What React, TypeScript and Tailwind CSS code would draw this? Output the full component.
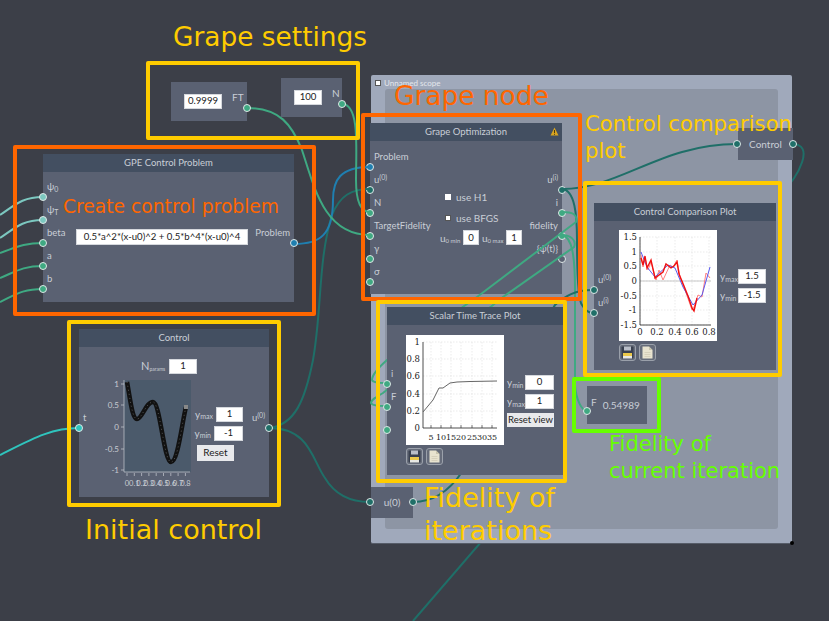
import React from 'react'

const TEAL = '#1f6f68'
const GREEN = '#3fa982'

const Dot = ({ fill, className }: { fill: string; className: string }) => (
  <span
    className={`absolute w-[8px] h-[8px] rounded-full border border-[#dfe8e8] ${className}`}
    style={{ backgroundColor: fill }}
  />
)

interface PortDef {
  label?: React.ReactNode
  fill: string
}

// one column of node ports, 23px apart, label sits above the dot
const PortCol: React.FC<{ ports: PortDef[]; side: 'left' | 'right'; className: string }> = ({ ports, side, className }) => (
  <div className={`absolute flex flex-col ${side === 'left' ? 'left-0 items-start' : 'right-0 items-end'} ${className}`}>
    {ports.map((p, i) => (
      <div key={i} className="relative h-[23px] flex items-end pb-[5px] px-[4px] text-[9.5px] leading-[12px] text-[#c9ced6] whitespace-nowrap">
        {p.label}
        <Dot fill={p.fill} className={side === 'left' ? 'left-[-4px] bottom-[-3px]' : 'right-[-4px] bottom-[-3px]'} />
      </div>
    ))}
  </div>
)

const Title: React.FC<{ children: React.ReactNode }> = ({ children }) => (
  <div className="relative h-[18px] bg-[#434f61] flex items-center justify-center text-[9.5px] font-normal text-[#c9ced6]">{children}</div>
)

const Field: React.FC<{ value: string; className: string }> = ({ value, className }) => (
  <div className={`bg-white flex items-center justify-center text-[9.6px] text-[#222] border border-[#d5d8dd] whitespace-nowrap ${className}`}>{value}</div>
)

const Sub: React.FC<{ a: string; b: string }> = ({ a, b }) => (
  <span className="text-[10px] text-[#c9ced6] whitespace-nowrap">
    {a}
    <sub className="text-[7px]">{b}</sub>
  </span>
)

const USup: React.FC<{ s: string }> = ({ s }) => (
  <span>
    u<sup className="text-[7px]">({s})</sup>
  </span>
)

const SaveIcon = () => (
  <div className="w-[17px] h-[17px] rounded-[3px] border border-[#9aa0aa] bg-[#666c7a] flex items-center justify-center">
    <svg width="13" height="13" viewBox="0 0 13 13">
      <rect x="0.5" y="0.5" width="12" height="12" rx="1" fill="#39404f" />
      <rect x="3" y="0.5" width="7" height="4" fill="#b9bec8" />
      <rect x="2" y="7" width="9" height="3" fill="#ecc94a" />
      <rect x="2" y="10" width="9" height="2.5" fill="#e8e8e4" />
    </svg>
  </div>
)

const DocIcon = () => (
  <div className="w-[17px] h-[17px] rounded-[3px] border border-[#9aa0aa] bg-[#666c7a] flex items-center justify-center">
    <svg width="11" height="13" viewBox="0 0 11 13">
      <path d="M0.5 0.5 H7 L10.5 4 V12.5 H0.5 Z" fill="#e8e3cf" />
      <path d="M7 0.5 V4 H10.5" fill="#c9c4ae" />
      <path d="M2.5 6.5 H8.5 M2.5 8.5 H8.5 M2.5 10.5 H8.5" stroke="#d0cbb6" strokeWidth="0.8" />
    </svg>
  </div>
)

const ControlPlot = () => {
  const xs = ['0', '0.1', '0.2', '0.3', '0.4', '0.5', '0.6', '0.7', '0.8']
  const ys: [string, number][] = [['1', 382], ['0.5', 403], ['0', 425], ['-0.5', 447], ['-1', 468]]
  const curve = 'M127 380 C130 395 132 417 137 417 C142 417 146 400 153 400 C160 400 164 460 171 460 C178 460 182 420 186 405'
  return (
    <svg width="87" height="112" viewBox="105 378 87 112" className="block" fontFamily="Lato, sans-serif">
      <rect x="124" y="378" width="67" height="92" fill="#4b5a6b" />
      <path d="M124 378 V470 H190" stroke="#c8ccd3" strokeWidth="0.7" fill="none" />
      {ys.map(([t, y]) => (
        <g key={t}>
          <path d={`M121 ${y} H124`} stroke="#c8ccd3" strokeWidth="0.7" />
          <text x="119" y={y + 3} textAnchor="end" fontSize="8" fill="#c8ccd3">{t}</text>
        </g>
      ))}
      {xs.map((t, i) => (
        <g key={t}>
          <path d={`M${127 + i * 7.3} 471 V474`} stroke="#c8ccd3" strokeWidth="0.7" />
          <text x={127 + i * 7.3} y="484" textAnchor="middle" fontSize="7.5" fill="#c8ccd3">{t}</text>
        </g>
      ))}
      <path d={curve} stroke="#111" strokeWidth="4.5" fill="none" />
      <path d={curve} stroke="#555" strokeWidth="1" strokeDasharray="1 3" fill="none" />
      <rect x="184" y="403" width="4" height="4" fill="#888" />
    </svg>
  )
}

const TracePlot = () => {
  const ys: [string, number][] = [['1', 342], ['0.8', 359], ['0.6', 376], ['0.4', 394], ['0.2', 411], ['0', 428]]
  const xs: [string, number][] = [['5', 431], ['10', 441], ['15', 451], ['20', 461], ['25', 472], ['30', 482], ['35', 492]]
  return (
    <svg width="98" height="110" viewBox="406 335 98 110" className="block bg-white" fontFamily="'DejaVu Serif', serif">
      {ys.slice(0, 5).map(([t, y]) => (
        <path key={t} d={`M423 ${y} H497`} stroke="#ddd" strokeWidth="0.6" strokeDasharray="1.5 1.5" />
      ))}
      {xs.map(([t, x]) => (
        <path key={t} d={`M${x} 342 V428`} stroke="#ddd" strokeWidth="0.6" strokeDasharray="1.5 1.5" />
      ))}
      <path d="M423 342 V428 H497" stroke="#222" strokeWidth="0.8" fill="none" />
      {ys.map(([t, y]) => (
        <text key={t} x="420" y={y + 3} textAnchor="end" fontSize="8.5" fill="#222">{t}</text>
      ))}
      {xs.map(([t, x]) => (
        <g key={t}>
          <path d={`M${x} 428 V425`} stroke="#222" strokeWidth="0.6" />
          <text x={x} y="440" textAnchor="middle" fontSize="8" fill="#222">{t}</text>
        </g>
      ))}
      <path d="M423 412 L433 400 L439 388 L443 388 L450 383 L457 382 L470 381.5 L497 381" stroke="#666" strokeWidth="1" fill="none" />
    </svg>
  )
}

const ComparisonPlot = () => {
  const ys: [string, number][] = [['1.5', 237], ['1', 252], ['0.5', 266], ['0', 281], ['-0.5', 296], ['-1', 310], ['-1.5', 325]]
  const xs: [string, number][] = [['0', 640], ['0.2', 657], ['0.4', 675], ['0.6', 692], ['0.8', 709]]
  return (
    <svg width="98" height="111" viewBox="619 230 98 111" className="block bg-white" fontFamily="'DejaVu Serif', serif">
      {ys.map(([t, y]) => (
        <path key={t} d={`M640 ${y} H711`} stroke="#ddd" strokeWidth="0.6" strokeDasharray="1.5 1.5" />
      ))}
      {xs.map(([t, x]) => (
        <path key={t} d={`M${x} 237 V325`} stroke="#ddd" strokeWidth="0.6" strokeDasharray="1.5 1.5" />
      ))}
      <path d="M640 281 H711" stroke="#bbb" strokeWidth="0.8" />
      <path d="M640 237 V325 H711" stroke="#222" strokeWidth="0.8" fill="none" />
      {ys.map(([t, y]) => (
        <text key={t} x="637" y={y + 3} textAnchor="end" fontSize="8.5" fill="#222">{t}</text>
      ))}
      {xs.map(([t, x]) => (
        <text key={t} x={x} y="335" textAnchor="middle" fontSize="8.5" fill="#222">{t}</text>
      ))}
      <polyline points="641,255 643,267 645,258 648,270 651,262 656,280 659,270 663,280 670,265 673,267 677,260 680,277 685,290 692,310 694,307 698,295 702,297 706,273 710,278" fill="none" stroke="#ff8080" strokeWidth="1" />
      <polyline points="641,252 647,267 655,277 668,265 675,268 683,287 693,305 702,295 710,267" fill="none" stroke="#5a5af0" strokeWidth="1" />
      <polyline points="641,258 643,265 645,256 647,268 651,260 655,278 663,272 666,264 671,268 674,266 677,262 679,274 684,286 688,296 692,308 694,311 697,298" fill="none" stroke="#f01010" strokeWidth="1.4" />
    </svg>
  )
}

const Box: React.FC<{ className: string }> = ({ className }) => (
  <div className={`absolute border-4 rounded-[2px] ${className}`} />
)

const Note: React.FC<{ className: string; children: React.ReactNode }> = ({ className, children }) => (
  <div className={`absolute font-['DejaVu_Sans',sans-serif] whitespace-nowrap ${className}`}>{children}</div>
)

export default function App() {
  return (
    <div className="relative w-[829px] h-[621px] overflow-hidden bg-[#3c3f48] font-['Lato',sans-serif]">
      {/* wire running behind the scope */}
      <svg className="absolute inset-0" width="829" height="621" fill="none">
        <path d="M792 144 C815 144 800 175 780 195 L413 621" stroke={TEAL} strokeWidth="2" />
      </svg>

      {/* scope */}
      <div className="absolute left-[371px] top-[75px] w-[421px] h-[469px] bg-[#a0a9bb] border-b border-[#565c68] rounded-[2px] p-[14px]">
        <div className="absolute left-[4px] top-[4px] flex items-center gap-[3px]">
          <span className="w-[6px] h-[6px] bg-white border border-[#555]" />
          <span className="text-[8px] leading-[8px] text-[#e4e7ec]">Unnamed scope</span>
        </div>
        <div className="w-full h-full rounded-[3px] bg-[#8d95a4]" />
        <span className="absolute right-[-2px] bottom-[-2px] w-[4px] h-[4px] rounded-full bg-black" />
      </div>

      {/* Grape node sits under the wires */}
      <div className="absolute left-[370px] top-[123px] w-[192px] h-[171px] bg-[#5a6172]">
        <Title>
          Grape Optimization
          <svg className="absolute right-[3px] top-[4px]" width="9" height="9" viewBox="0 0 9 9">
            <path d="M4.5 0.5 L8.5 8.5 H0.5 Z" fill="#d9a520" />
            <path d="M4.5 3 V6 M4.5 6.8 V7.8" stroke="#4a3a10" strokeWidth="1" />
          </svg>
        </Title>
        <PortCol
          side="left"
          className="top-[22px]"
          ports={[
            { label: 'Problem', fill: '#1f7fb0' },
            { label: <USup s="0" />, fill: TEAL },
            { label: 'N', fill: GREEN },
            { label: 'TargetFidelity', fill: GREEN },
            { label: 'γ', fill: GREEN },
            { label: 'σ', fill: GREEN },
          ]}
        />
        <PortCol
          side="right"
          className="top-[45px]"
          ports={[
            { label: <USup s="i" />, fill: TEAL },
            { label: 'i', fill: GREEN },
            { label: 'fidelity', fill: GREEN },
            { label: '{ψ(t)}', fill: '#5a6172' },
          ]}
        />
        <div className="flex flex-col items-start pl-[70px] pt-[50px] text-[10px] leading-[12px] text-[#c9ced6]">
          <div className="flex items-center gap-[5px] ml-[5px] h-[12px]">
            <span className="w-[6px] h-[6px] bg-white" />
            use H1
          </div>
          <div className="flex items-center gap-[5px] ml-[5px] mt-[9px] h-[12px]">
            <span className="w-[6px] h-[6px] bg-white border border-[#555]" />
            use BFGS
          </div>
          <div className="flex items-center mt-[6px]">
            <span className="w-[23px] whitespace-nowrap">
              u<sub className="text-[6px]">0 min</sub>
            </span>
            <Field value="0" className="w-[16px] h-[15px]" />
            <span className="ml-[3px] w-[24px] whitespace-nowrap">
              u<sub className="text-[6px]">0 max</sub>
            </span>
            <Field value="1" className="w-[16px] h-[15px]" />
          </div>
        </div>
      </div>

      {/* wires */}
      <svg className="absolute inset-0" width="829" height="621" fill="none" strokeWidth="2">
        <path d="M0 215 C15 205 22 197 43 197" stroke="#7cc8c0" />
        <path d="M0 238 C15 228 22 220 43 220" stroke="#7cc8c0" />
        <path d="M0 253 C15 248 22 243 43 243" stroke={GREEN} />
        <path d="M0 278 C15 272 22 266 43 266" stroke={GREEN} />
        <path d="M0 302 C15 295 22 289 43 289" stroke={GREEN} />
        <path d="M0 455 C30 440 50 428 79 428" stroke="#2fc4bd" />
        <path d="M269 428 C295 425 305 400 313 360 C322 310 318 260 332 215 C340 195 352 189 370 189" stroke={TEAL} />
        <path d="M269 428 C310 428 312 460 325 478 C335 495 350 502 370 502" stroke={TEAL} />
        <path d="M294 244 C320 244 333 235 333 200 C333 180 340 167 370 167" stroke="#1f7fb0" />
        <path d="M247 108 C280 108 292 125 302 150 C315 190 325 235 370 235" stroke={GREEN} />
        <path d="M342 104 C360 104 356 150 356 180 C356 200 360 212 370 212" stroke={GREEN} />
        <path d="M562 189 C620 189 660 144 737 144" stroke={TEAL} />
        <path d="M562 189 C575 190 577 215 577 240 C577 270 578 300 582 305 C585 310 588 313 593 313" stroke={TEAL} />
        <path d="M562 212 C572 212 578 214 576 222 L477 297 L387 360 C378 368 372 375 372 380 C373 383 380 383 387 383" stroke={GREEN} />
        <path d="M562 235 C570 235 577 240 574 247 L503 297 L383 393 C376 397 371 400 371 403 C372 406 380 406 387 406" stroke={GREEN} />
        <path d="M562 235 C572 237 575 255 575 290 L575 385 C576 400 582 411 587 411" stroke={GREEN} />
        <path d="M413 502 C435 502 450 490 462 472 L555 305 C565 296 575 290 593 290" stroke={TEAL} />
      </svg>

      {/* GPE Control Problem */}
      <div className="absolute left-[43px] top-[154px] w-[251px] h-[148px] bg-[#5a6172]">
        <Title>GPE Control Problem</Title>
        <PortCol
          side="left"
          className="top-[21px]"
          ports={[
            { label: <span>ψ<sub className="text-[7px]">0</sub></span>, fill: '#7cc8c0' },
            { label: <span>ψ<sub className="text-[7px]">T</sub></span>, fill: '#7cc8c0' },
            { label: 'beta', fill: GREEN },
            { label: 'a', fill: GREEN },
            { label: 'b', fill: GREEN },
          ]}
        />
        <PortCol side="right" className="top-[67px]" ports={[{ label: 'Problem', fill: '#1f7fb0' }]} />
        <div className="pl-[33px] pt-[57px]">
          <Field value="0.5*a^2*(x-u0)^2 + 0.5*b^4*(x-u0)^4" className="w-[172px] h-[16px]" />
        </div>
      </div>

      {/* Grape settings values */}
      <div className="absolute left-[171px] top-[82px] w-[76px] h-[39px] bg-[#5a6172] flex items-center pl-[13px] text-[10px] text-[#c9ced6]">
        <Field value="0.9999" className="w-[38px] h-[15px]" />
        <span className="ml-[10px] mb-[8px]">FT</span>
        <Dot fill={GREEN} className="right-[-4px] top-[22px]" />
      </div>
      <div className="absolute left-[281px] top-[78px] w-[61px] h-[39px] bg-[#5a6172] flex items-center pl-[13px] text-[10px] text-[#c9ced6]">
        <Field value="100" className="w-[28px] h-[15px]" />
        <span className="ml-[10px] mb-[8px]">N</span>
        <Dot fill={GREEN} className="right-[-4px] top-[22px]" />
      </div>

      {/* Control */}
      <div className="absolute left-[79px] top-[329px] w-[190px] h-[168px] bg-[#5a6172]">
        <Title>Control</Title>
        <PortCol side="left" className="top-[77px]" ports={[{ label: 't', fill: '#2fc4bd' }]} />
        <PortCol side="right" className="top-[77px]" ports={[{ label: <USup s="0" />, fill: TEAL }]} />
        <div className="flex items-center pt-[11px] pl-[62px] gap-[3px] text-[11px] text-[#c9ced6]">
          <span className="w-[25px] whitespace-nowrap">
            N<sub className="text-[5px]">params</sub>
          </span>
          <Field value="1" className="w-[28px] h-[15px]" />
        </div>
        <div className="flex pl-[26px] mt-[5px]">
          <ControlPlot />
          <div className="ml-[5px] mt-[27px] flex flex-col gap-[4px] items-end w-[46px]">
            <div className="flex items-center gap-[3px]">
              <Sub a="y" b="max" />
              <Field value="1" className="w-[27px] h-[15px]" />
            </div>
            <div className="flex items-center gap-[3px]">
              <Sub a="y" b="min" />
              <Field value="-1" className="w-[29px] h-[15px]" />
            </div>
            <div className="self-start flex items-center justify-center w-[37px] h-[16px] bg-[#e8e9ec] text-[10px] text-[#222]">Reset</div>
          </div>
        </div>
      </div>

      {/* Scalar Time Trace Plot */}
      <div className="absolute left-[387px] top-[307px] w-[176px] h-[168px] bg-[#5a6172]">
        <Title>Scalar Time Trace Plot</Title>
        <PortCol
          side="left"
          className="top-[55px]"
          ports={[
            { label: 'i', fill: GREEN },
            { label: 'F', fill: GREEN },
            { label: '', fill: GREEN },
          ]}
        />
        <div className="flex pl-[19px] pt-[10px]">
          <div className="flex flex-col gap-[3px]">
            <TracePlot />
            <div className="flex gap-[3px]">
              <SaveIcon />
              <DocIcon />
            </div>
          </div>
          <div className="ml-[3px] mt-[40px] flex flex-col gap-[4px] w-[47px]">
            <div className="flex items-center justify-between">
              <Sub a="y" b="min" />
              <Field value="0" className="w-[29px] h-[15px]" />
            </div>
            <div className="flex items-center justify-between">
              <Sub a="y" b="max" />
              <Field value="1" className="w-[29px] h-[15px]" />
            </div>
            <div className="flex items-center justify-center w-[47px] h-[14px] bg-[#e8e9ec] text-[9.5px] text-[#222] whitespace-nowrap">Reset view</div>
          </div>
        </div>
      </div>

      {/* Control Comparison Plot */}
      <div className="absolute left-[594px] top-[203px] w-[182px] h-[167px] bg-[#5a6172]">
        <Title>Control Comparison Plot</Title>
        <PortCol
          side="left"
          className="top-[65px]"
          ports={[
            { label: <USup s="0" />, fill: TEAL },
            { label: <USup s="i" />, fill: TEAL },
          ]}
        />
        <div className="flex pl-[25px] pt-[9px]">
          <div className="flex flex-col gap-[3px]">
            <ComparisonPlot />
            <div className="flex gap-[3px]">
              <SaveIcon />
              <DocIcon />
            </div>
          </div>
          <div className="ml-[3px] mt-[39px] flex flex-col gap-[4px] w-[46px]">
            <div className="flex items-center justify-between">
              <Sub a="y" b="max" />
              <Field value="1.5" className="w-[28px] h-[15px]" />
            </div>
            <div className="flex items-center justify-between">
              <Sub a="y" b="min" />
              <Field value="-1.5" className="w-[28px] h-[15px]" />
            </div>
          </div>
        </div>
      </div>

      {/* small display nodes */}
      <div className="absolute left-[587px] top-[386px] w-[60px] h-[38px] bg-[#5a6172] flex items-center text-[10px] text-[#c9ced6]">
        <span className="ml-[4px] mb-[6px]">F</span>
        <span className="ml-[6px]">0.54989</span>
        <Dot fill={GREEN} className="left-[-4px] top-[21px]" />
      </div>
      <div className="absolute left-[371px] top-[487px] w-[42px] h-[31px] bg-[#5a6172] flex items-center justify-center text-[10px] text-[#c9ced6]">
        u(0)
        <Dot fill={TEAL} className="left-[-5px] top-[11px]" />
        <Dot fill={TEAL} className="right-[-4px] top-[11px]" />
      </div>
      <div className="absolute left-[738px] top-[128px] w-[55px] h-[32px] bg-[#5a6172] flex items-center justify-center text-[10px] text-[#c9ced6]">
        Control
        <Dot fill={TEAL} className="left-[-5px] top-[12px]" />
        <Dot fill={TEAL} className="right-[-4px] top-[12px]" />
      </div>

      {/* annotations */}
      <Box className="left-[146px] top-[61px] w-[214px] h-[79px] border-[#ffcc00]" />
      <Box className="left-[13px] top-[145px] w-[303px] h-[171px] border-[#ff6600]" />
      <Box className="left-[361px] top-[113px] w-[221px] h-[188px] border-[#ff6600]" />
      <Box className="left-[67px] top-[320px] w-[214px] h-[187px] border-[#ffcc00]" />
      <Box className="left-[376px] top-[300px] w-[191px] h-[183px] border-[#ffcc00]" />
      <Box className="left-[583px] top-[181px] w-[199px] h-[196px] border-[#ffcc00]" />
      <Box className="left-[572px] top-[377px] w-[89px] h-[56px] border-[#66ff00]" />

      <Note className="left-[173px] top-[21px] text-[26.4px] leading-[32px] text-[#ffcc00]">Grape settings</Note>
      <Note className="left-[63px] top-[195px] text-[18.7px] leading-[24px] text-[#ff6600]">Create control problem</Note>
      <Note className="left-[394px] top-[80px] text-[26.4px] leading-[32px] text-[#ff6600]">Grape node</Note>
      <Note className="left-[585px] top-[110px] text-[21.2px] leading-[27px] text-[#ffcc00]">
        Control comparison
        <br />
        plot
      </Note>
      <Note className="left-[85px] top-[514px] text-[27px] leading-[32px] text-[#ffcc00]">Initial control</Note>
      <Note className="left-[424px] top-[481px] text-[27px] leading-[33px] text-[#ffcc00]">
        Fidelity of
        <br />
        iterations
      </Note>
      <Note className="left-[609px] top-[431px] text-[21px] leading-[27px] text-[#66ff00]">
        Fidelity of
        <br />
        current iteration
      </Note>
    </div>
  )
}
